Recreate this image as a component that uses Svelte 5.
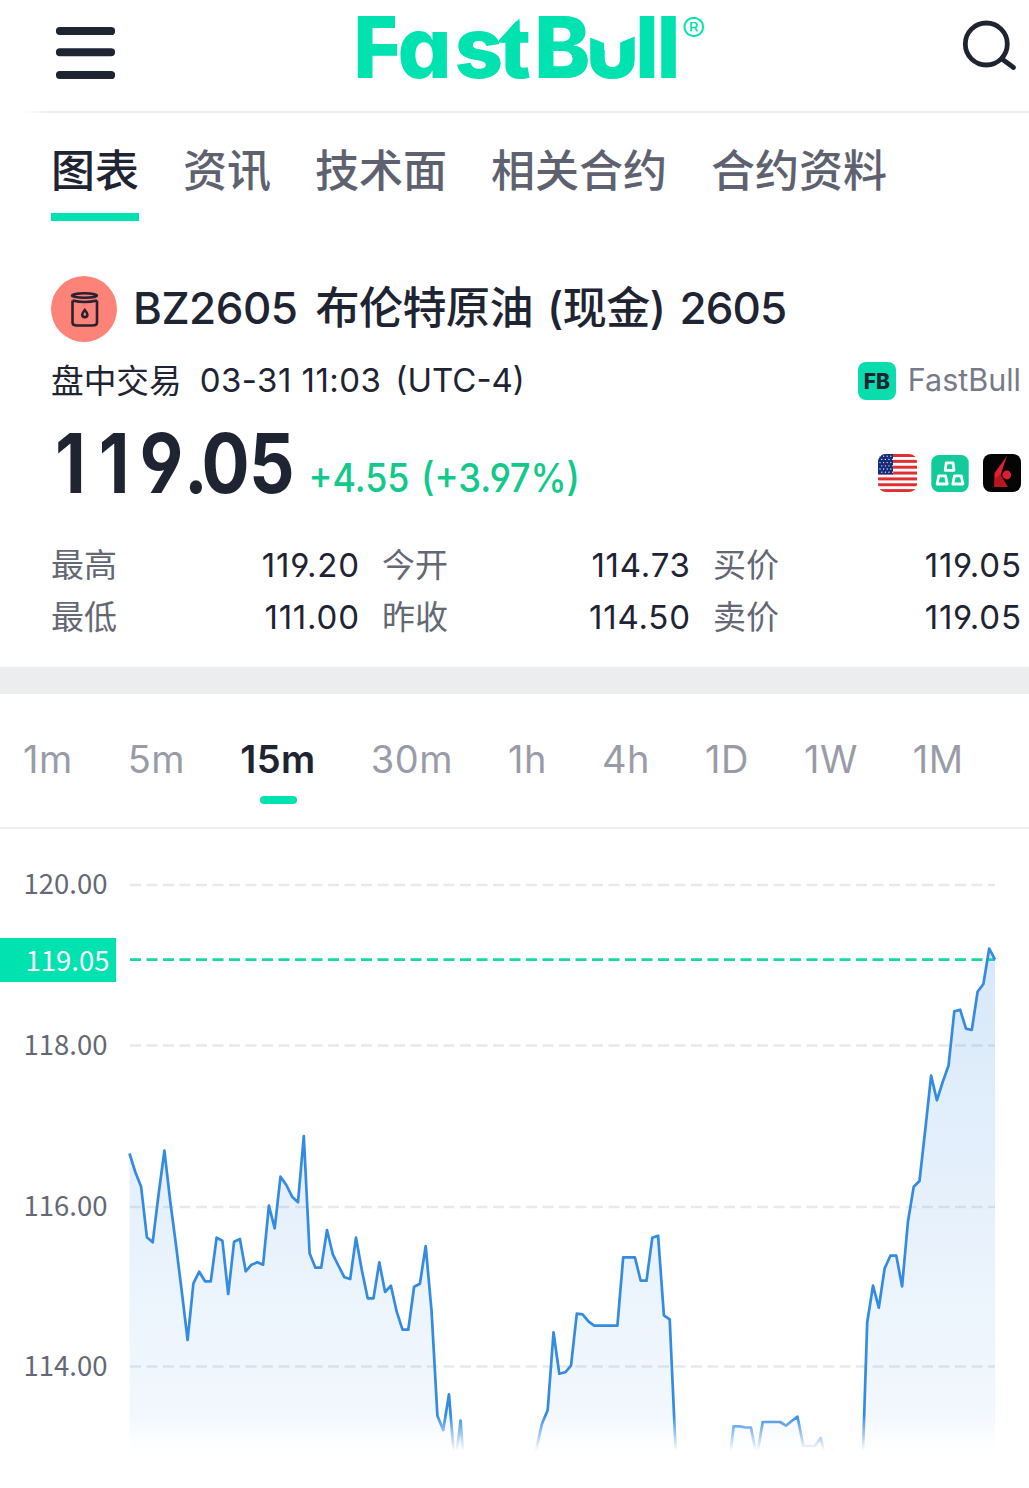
<script>
  const tabs = ['图表', '资讯', '技术面', '相关合约', '合约资料'];
  const stats = [
    ['最高', '119.20'], ['今开', '114.73'], ['买价', '119.05'],
    ['最低', '111.00'], ['昨收', '114.50'], ['卖价', '119.05']
  ];
  const frames = ['1m', '5m', '15m', '30m', '1h', '4h', '1D', '1W', '1M'];
  const grid = [
    { y: 885, label: '120.00' },
    { y: 1045.5, label: '118.00' },
    { y: 1207, label: '116.00' },
    { y: 1366.5, label: '114.00' }
  ];
  // Line heights of the series, one per 15-minute step
  const series = [
    1153.5, 1172, 1186.7, 1237.3, 1242.3, 1195, 1150.7, 1201, 1245, 1291.7, 1340, 1283.3, 1271.7, 1281.3, 1281.3,
    1237.7, 1240.7, 1294, 1241.7, 1239, 1271.3, 1264.7, 1262.3, 1264.7, 1205.7, 1228.3, 1176.7, 1185, 1196.7,
    1202.3, 1136, 1253.3, 1267.7, 1267.7, 1230, 1254.3, 1266, 1277.3, 1279, 1237.7, 1270, 1298.3, 1298.3, 1262.3,
    1292, 1285.7, 1311.7, 1329.7, 1329.7, 1286.7, 1283.7, 1246, 1311.7, 1415.7, 1430, 1394.3, 1467, 1420.7, 1503,
    1520, 1520, 1520, 1520, 1520, 1520, 1520, 1520, 1520, 1500, 1470, 1450, 1424, 1410, 1332.3, 1373.7, 1372.3,
    1365.7, 1313.7, 1314.3, 1321.3, 1325.7, 1325.7, 1325.7, 1325.7, 1325.7, 1257.3, 1257.3, 1257.3, 1280.7, 1280.7,
    1237.7, 1235.7, 1315.3, 1319.3, 1447, 1570, 1570, 1570, 1570, 1570, 1570, 1570, 1500, 1475, 1426.3, 1426.3,
    1427.3, 1427.7, 1457, 1422, 1422, 1422, 1422, 1425.7, 1421, 1416.7, 1446, 1446, 1446, 1438, 1460, 1450, 1470,
    1500, 1500, 1500, 1500, 1322.5, 1285.7, 1307.7, 1268.5, 1255.7, 1255.7, 1286.4, 1222, 1186.8, 1181, 1129.3,
    1075.6, 1100.3, 1082, 1065.8, 1011.4, 1009.7, 1028.6, 1030, 991.8, 984, 948.5, 959.7
  ];
  const step = 865.5 / (series.length - 1);
  const line = series.map((y, i) => `${(129.5 + i * step).toFixed(1)},${y}`).join(' ');
  const area = `129.5,1600 ${line} 995,1600`;
  const stars = [0, 1, 2, 3, 4, 5].flatMap((r) => [0, 1, 2, 3].map((c) => [2 + c * 3.6 + (r % 2) * 1.8, 2.2 + r * 3.2]));
</script>

<main>
  <header>
    <svg class="menu" viewBox="0 0 60 54">
      <path d="M4.9 5H56.1M4.9 26.2H56.1M4.9 49H56.1" />
    </svg>
    <svg class="logo" viewBox="0 0 360 110">
      <text class="word" x="-2 42.500 99.500 143.500 179 230.500 280 301.500" y="77.500">FastBull</text>
      <path class="cut" d="M40 12H50V32H40ZM231 24H281V36L264 43V50H249V43L231 36Z" />
      <path class="cut" d="M143 41L164.500 17.500V30.500H176V10H143Z" />
      <path d="M142 42.500L164.500 18.500V42.500Z" />
      <text class="reg" x="326.500" y="42.500">®</text>
    </svg>
    <svg class="search" viewBox="0 0 56 56">
      <circle cx="25.300" cy="26" r="21" />
      <path d="M41 41L52.500 49.500" />
    </svg>
  </header>

  <nav class="tabs">
    {#each tabs as tab, i}
      <span class:active={i === 0}>{tab}</span>
    {/each}
  </nav>

  <section class="quote">
    <div class="title">
      <svg class="barrel" viewBox="0 0 66 66">
        <circle cx="33" cy="33" r="33" />
        <ellipse cx="33.500" cy="19.500" rx="12.500" ry="2.200" />
        <path d="M21.500 24.500V46.500Q21.500 49.500 26 49.500H41.500Q46 49.500 46 46.500V24.500M21.500 24.500Q33.500 27.500 46 24.500" />
        <path d="M33.800 34Q31.200 37 31.200 38.500A2.600 2.600 0 0 0 36.400 38.500Q36.400 37 33.800 34Z" />
      </svg>
      <h1><span>BZ2605</span><span class="name">布伦特原油</span><span class="kind">(现金)</span><span class="num">2605</span></h1>
    </div>

    <div class="status">
      <span class="state">盘中交易</span><span class="time">03-31 11:03</span><span class="zone">(UTC-4)</span>
      <span class="badge">FB</span><span class="source">FastBull</span>
    </div>

    <div class="price">
      <svg class="figures" viewBox="0 0 540 98">
        <text class="last" transform="scale(0.870 1)" x="4.500 55 101.600 153 173 227.500" y="83.500">119.05</text>
        <text class="change" x="257.500" y="81.500" textLength="101" lengthAdjust="spacingAndGlyphs">+4.55</text>
        <text class="change" x="370" y="81.500" textLength="159" lengthAdjust="spacingAndGlyphs">(+3.97%)</text>
      </svg>
      <div class="marks">
        <svg class="flag" viewBox="0 0 39 38">
          <clipPath id="flag"><rect width="39" height="38" rx="8" /></clipPath>
          <g clip-path="url(#flag)">
            <rect width="39" height="38" fill="#fff" />
            {#each [0, 1, 2, 3, 4, 5, 6] as n}
              <rect y={n * 5.85} width="39" height="3" fill="#e02f34" />
            {/each}
            <rect width="15" height="20.400" fill="#142c7a" />
            {#each stars as [x, y]}
              <circle cx={x} cy={y} r="0.65" fill="#fff" />
            {/each}
          </g>
        </svg>
        <svg viewBox="0 0 38 38">
          <rect x="0.300" y="1" width="37.400" height="37" rx="7.500" fill="#12ca9a" />
          <g fill="none" stroke="#fff" stroke-width="2.800" stroke-linejoin="round">
            <path d="M15.200 8.800H22L23 16.300H14.200Z" />
            <path d="M7.800 21.800H14.500L16.200 30H6.100Z" />
            <path d="M23.500 21.800H30.200L31.900 30H21.800Z" />
          </g>
        </svg>
        <svg viewBox="0 0 38 38">
          <rect width="38" height="38" rx="8" fill="#050505" />
          <path d="M24 2L11.500 19V33L17.500 21Z" fill="#e01f30" />
          <path d="M11.500 33V25L17.500 20.500L25 33Z" fill="#b9141f" />
          <circle cx="23.800" cy="21" r="4.400" fill="#dc1f2f" />
        </svg>
      </div>
    </div>

    <div class="stats">
      {#each stats as [label, value]}
        <div><span>{label}</span><b>{value}</b></div>
      {/each}
    </div>
  </section>

  <nav class="frames">
    {#each frames as frame}
      <span class:active={frame === '15m'}>{frame}</span>
    {/each}
  </nav>

  <svg class="chart" viewBox="0 829 1029 659">
    <defs>
      <linearGradient id="fill" gradientUnits="userSpaceOnUse" x1="0" y1="948" x2="0" y2="1451">
        <stop offset="0" stop-color="#2f87e2" stop-opacity="0.190" />
        <stop offset="1" stop-color="#2f87e2" stop-opacity="0.050" />
      </linearGradient>
      <linearGradient id="fade" gradientUnits="userSpaceOnUse" x1="0" y1="1415" x2="0" y2="1451">
        <stop offset="0" stop-color="#fff" stop-opacity="0" />
        <stop offset="1" stop-color="#fff" />
      </linearGradient>
    </defs>
    {#each grid as g}
      <path class="rule" d="M130 {g.y}H995" />
      <text x="107.500" y={g.y + 9.300}>{g.label}</text>
    {/each}
    <polygon points={area} fill="url(#fill)" />
    <path class="rule current" d="M130 959.700H995" />
    <polyline points={line} />
    <rect y="1415" width="1029" height="36.500" fill="url(#fade)" />
    <rect y="1451" width="1029" height="60" fill="#fff" />
    <rect class="tag" y="938" width="116" height="44" />
    <text class="now" x="109.500" y="971">119.05</text>
  </svg>
</main>

<style>
  :global(body) { background: #fff; }
  main {
    width: 1029px; height: 1488px; overflow: hidden; color: #1f2433;
    font-family: Inter, 'Noto Sans CJK SC', sans-serif;
    font-feature-settings: 'cv04';
  }
  svg { display: block; flex: none; }
  header {
    display: flex; width: 974px; height: 111px; padding-left: 55px;
    border-bottom: 2px solid; border-image: linear-gradient(90deg, #fff 25px, #ececee 50px) 1;
  }
  .menu { width: 60px; height: 54px; margin-top: 26px; fill: none; stroke: #1f2433; stroke-width: 8; stroke-linecap: round; }
  .logo { width: 360px; height: 110px; margin-left: 240px; overflow: visible; fill: #00e2b0; }
  .word { font: 800 85px Inter, sans-serif; font-feature-settings: 'cv11', 'cv06'; }
  .cut { fill: #fff; }
  .reg { font: 300 36px Inter, sans-serif; }
  .search { width: 56px; height: 56px; margin: 18px 0 0 246px; fill: none; stroke: #1f2433; stroke-width: 4.800; stroke-linecap: round; }

  .tabs { display: flex; gap: 44px; padding-left: 51px; height: 108px; }
  .tabs span { font-size: 44px; line-height: 64px; padding-top: 26px; height: 74px; color: #5e6270; font-weight: 500; }
  .tabs .active { color: #1f2433; border-bottom: 8px solid #00e2b0; }

  .quote { padding: 55px 8px 0 51px; height: 391px; border-bottom: 27px solid #ecedef; }
  .title { display: flex; height: 66px; align-items: center; }
  .barrel { width: 66px; height: 66px; fill: none; stroke: #2a2230; stroke-width: 2.600; }
  .barrel circle { fill: #fd8278; stroke: none; }
  h1 { display: flex; margin: 0 0 2px 16px; font-size: 44px; font-weight: 500; line-height: 64px; white-space: nowrap; letter-spacing: -0.500px; }
  .name { margin-left: 18px; }
  .kind { margin-left: 14px; }
  .num { margin-left: 14px; letter-spacing: -0.900px; }

  .status { display: flex; height: 48px; margin-top: 14px; align-items: center; font-size: 33px; white-space: nowrap; }
  .state { font-size: 32.700px; margin-bottom: 3px; }
  .time { margin-left: 18px; letter-spacing: 0.450px; }
  .zone { margin-left: 14px; }
  .badge {
    width: 38px; height: 38px; margin: 2px 0 0 auto; border-radius: 8px; background: #0bdcae;
    font: 800 21px/39px Inter, sans-serif; text-align: center;
  }
  .source { margin: 0 0 2px 12px; font-size: 30.500px; color: #777a87; }

  .price { display: flex; height: 98px; margin-top: 6px; align-items: center; }
  .figures { width: 540px; height: 98px; overflow: visible; }
  .last { font: 700 82px Inter, sans-serif; font-feature-settings: 'cv04'; fill: #1f2433; }
  .change { font: 500 39.500px Inter, sans-serif; font-feature-settings: 'cv04'; fill: #12c98b; }
  .marks { display: flex; gap: 14px; margin: 28px 0 0 auto; }
  .marks svg { width: 38px; height: 38px; }
  .marks .flag { width: 39px; }

  .stats { display: grid; grid-template-columns: repeat(3, 308px); gap: 0 23px; margin-top: 31px; }
  .stats div { display: flex; justify-content: space-between; font-size: 33px; line-height: 52px; height: 52px; }
  .stats span { color: #646875; }
  .stats b { font-weight: 400; letter-spacing: 0.800px; margin-right: -0.800px; }

  .frames { display: flex; height: 133px; padding-left: 23px; gap: 55px; border-bottom: 2px solid #eeeff1; font-size: 38px; line-height: 131px; letter-spacing: 0.500px; color: #999ca8; }
  .frames span { position: relative; }
  .frames .active { color: #1f2433; font-weight: 600; }
  .frames .active::after { content: ''; position: absolute; left: calc(50% - 18px); top: 102px; width: 37px; height: 8px; border-radius: 4px; background: #00e2b0; }

  .chart { width: 1029px; height: 659px; }
  .chart text { font: 400 27.500px 'Noto Sans CJK SC', sans-serif; fill: #646875; text-anchor: end; }
  .chart .now { fill: #fff; }
  .tag { fill: #00e2b0; }
  .rule { fill: none; stroke: #e8e9eb; stroke-width: 2.500; stroke-dasharray: 11 5.500; }
  .current { stroke: #13d9a9; stroke-width: 2.800; }
  polyline { fill: none; stroke: #338be2; stroke-width: 2.700; stroke-linejoin: round; }
</style>
